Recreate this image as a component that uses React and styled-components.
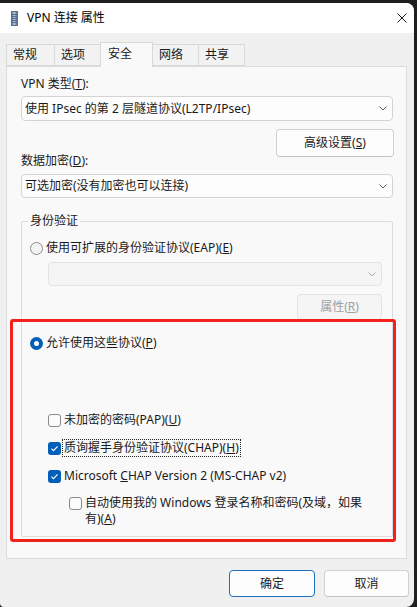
import React from "react";
import styled, { createGlobalStyle } from "styled-components";

const GlobalStyle = createGlobalStyle`
  html, body {
    margin: 0;
    padding: 0;
    background: #1f1f1f;
  }
  body {
    font-family: "Noto Sans", "Noto Sans CJK SC", sans-serif;
    font-size: 12px;
    color: #1a1a1a;
  }
  * {
    box-sizing: border-box;
  }
`;

const Window = styled.div`
  width: 414px;
  height: 604px;
  margin-top: 3px;
  background: #f0f0f0;
  border-radius: 0 8px 8px 4px;
  overflow: hidden;
  display: flex;
  flex-direction: column;
`;

const TitleBar = styled.div`
  height: 30px;
  flex: none;
  background: #ffffff;
  display: flex;
  align-items: center;
  padding: 0 7px 0 11px;
`;

const Title = styled.span`
  margin-left: 9px;
  line-height: 16px;
  color: #000;
`;

const CloseButton = styled.div`
  margin-left: auto;
  width: 10px;
  height: 10px;
  display: flex;
`;

const Body = styled.div`
  padding: 9px 7px 0 6px;
  display: flex;
  flex-direction: column;
`;

const TabStrip = styled.div`
  display: flex;
  align-items: flex-end;
  height: 24px;
`;

const Tab = styled.div`
  width: ${(p) => p.$w}px;
  height: ${(p) => (p.$active ? 25 : 22)}px;
  margin-left: ${(p) => (p.$first ? 0 : -1)}px;
  margin-bottom: ${(p) => (p.$active ? -1 : 0)}px;
  border: 1px solid #d9d9d9;
  border-bottom: ${(p) => (p.$active ? "none" : "1px solid #d9d9d9")};
  background: ${(p) => (p.$active ? "#f9f9f9" : "#f2f2f2")};
  position: relative;
  z-index: ${(p) => (p.$active ? 1 : 0)};
  padding: 0 0 ${(p) => (p.$active ? 3 : 0)}px ${(p) => (p.$active ? 7 : 6)}px;
  display: flex;
  align-items: center;
  line-height: 16px;
`;

const Panel = styled.div`
  position: relative;
  height: 493px;
  border: 1px solid #dcdcdc;
  background: #f9f9f9;
  padding: 9px 13px 0 14px;
  display: flex;
  flex-direction: column;
`;

const FieldLabel = styled.div`
  line-height: 16px;
  margin-top: ${(p) => p.$mt || 0}px;
`;

const Select = styled.div`
  height: ${(p) => p.$h || 25}px;
  margin: ${(p) => p.$m || "4px 0 0 0"};
  border: 1px solid ${(p) => (p.$disabled ? "#e3e3e3" : "#d3d3d3")};
  border-radius: 4px;
  background: ${(p) => (p.$disabled ? "#f5f5f5" : "#fdfdfd")};
  display: flex;
  align-items: center;
  justify-content: space-between;
  padding: 0 5px 0 3px;
  line-height: 16px;
`;

const Chevron = ({ color = "#5f5f5f" }) => (
  <svg width="8" height="5" viewBox="0 0 8 5">
    <polyline points="0.5,0.5 4,4 7.5,0.5" fill="none" stroke={color} strokeWidth="1" />
  </svg>
);

const ButtonRow = styled.div`
  display: flex;
  justify-content: flex-end;
  margin: ${(p) => p.$m || "8px -1px 0 0"};
`;

const Button = styled.div`
  width: ${(p) => p.$w}px;
  height: ${(p) => p.$h}px;
  border: 1px solid ${(p) => (p.$primary ? "#1f6fc0" : p.$disabled ? "#e3e3e3" : "#d0d0d0")};
  border-bottom-color: ${(p) => (p.$primary ? "#1f6fc0" : p.$disabled ? "#e3e3e3" : "#c2c2c2")};
  border-radius: 4px;
  background: ${(p) => (p.$disabled ? "#f5f5f5" : "#fdfdfd")};
  color: ${(p) => (p.$disabled ? "#a0a0a0" : "#1a1a1a")};
  display: flex;
  align-items: center;
  justify-content: center;
  line-height: 16px;
`;

const GroupBox = styled.fieldset`
  margin: 15px 0 0 0;
  min-width: 0;
  border: 1px solid #dcdcdc;
  border-radius: 2px;
  padding: 11px 10px 9px 8px;
  display: flex;
  flex-direction: column;
`;

const Legend = styled.legend`
  margin-left: -2px;
  padding: 0 2px;
  line-height: 16px;
  font-size: 12px;
`;

const OptionRow = styled.div`
  display: flex;
  align-items: ${(p) => (p.$top ? "flex-start" : "center")};
  gap: 3px;
  line-height: 16px;
  margin-top: ${(p) => p.$mt || 0}px;
  margin-left: ${(p) => p.$ml || 0}px;
`;

const Radio = styled.span`
  flex: none;
  width: 13px;
  height: 13px;
  border-radius: 50%;
  position: relative;
  border: ${(p) => (p.$checked ? "none" : "1px solid #8a8a8a")};
  background: ${(p) => (p.$checked ? "#005fb8" : "#f3f3f3")};
  &::after {
    content: "";
    display: ${(p) => (p.$checked ? "block" : "none")};
    position: absolute;
    left: 4px;
    top: 4px;
    width: 5px;
    height: 5px;
    border-radius: 50%;
    background: #fff;
  }
`;

const CheckBox = styled.span`
  flex: none;
  width: 13px;
  height: 13px;
  margin-top: ${(p) => (p.$top ? 2 : 0)}px;
  border-radius: 3px;
  border: ${(p) => (p.$checked ? "none" : "1px solid #8a8a8a")};
  background: ${(p) => (p.$checked ? "#005fb8" : "#fbfbfb")};
  display: flex;
  align-items: center;
  justify-content: center;
`;

const CheckMark = () => (
  <svg width="13" height="13" viewBox="0 0 13 13">
    <polyline points="3.4,6.7 5.5,8.7 9.6,4.3" fill="none" stroke="#fff" strokeWidth="1.1" />
  </svg>
);

const ChecksColumn = styled.div`
  display: flex;
  flex-direction: column;
  gap: 11px;
  margin-top: 61px;
`;

const FocusLabel = styled.span`
  border: 1px dotted #202020;
  padding: 0 1px;
  margin-left: -2px;
  line-height: 16px;
`;

const Highlight = styled.div`
  position: absolute;
  left: 3px;
  top: 252px;
  width: 386px;
  height: 223px;
  border: 3px solid #f3211b;
  border-radius: 3px;
  pointer-events: none;
`;

const Footer = styled.div`
  display: flex;
  justify-content: flex-end;
  gap: 9px;
  padding: 11px 5px 0 0;
`;

const AppIcon = () => (
  <svg width="7" height="15" viewBox="0 0 7 15">
    <defs>
      <linearGradient id="vpnIcon" x1="0" x2="1" y1="0" y2="0">
        <stop offset="0" stopColor="#58769c" />
        <stop offset="0.45" stopColor="#b4c8df" />
        <stop offset="1" stopColor="#4d6a8f" />
      </linearGradient>
    </defs>
    <rect x="0.5" y="0.5" width="6" height="14" fill="url(#vpnIcon)" stroke="#5c6f87" />
    {[3, 5, 7, 9, 11].map((y) => (
      <line key={y} x1="1" x2="6" y1={y + 0.5} y2={y + 0.5} stroke="#3e5676" strokeOpacity="0.7" />
    ))}
  </svg>
);

const tabs = [
  { label: "常规", w: 49 },
  { label: "选项", w: 47 },
  { label: "安全", w: 53, active: true },
  { label: "网络", w: 47 },
  { label: "共享", w: 47 },
];

export default function App() {
  return (
    <>
      <GlobalStyle />
      <Window>
        <TitleBar>
          <AppIcon />
          <Title>VPN 连接 属性</Title>
          <CloseButton>
            <svg width="10" height="10" viewBox="0 0 10 10">
              <path d="M0.5 0.5 L9.5 9.5 M9.5 0.5 L0.5 9.5" stroke="#1a1a1a" strokeWidth="1" />
            </svg>
          </CloseButton>
        </TitleBar>
        <Body>
          <TabStrip>
            {tabs.map((t, i) => (
              <Tab key={t.label} $w={t.w} $active={t.active} $first={i === 0}>
                {t.label}
              </Tab>
            ))}
          </TabStrip>
          <Panel>
            <FieldLabel>
              VPN 类型(<u>T</u>):
            </FieldLabel>
            <Select>
              <span>使用 IPsec 的第 2 层隧道协议(L2TP/IPsec)</span>
              <Chevron />
            </Select>
            <ButtonRow>
              <Button $w={118} $h={28}>
                高级设置(<u>S</u>)
              </Button>
            </ButtonRow>
            <FieldLabel $mt={-4}>
              数据加密(<u>D</u>):
            </FieldLabel>
            <Select $h={24} $m="5px 0 0 0">
              <span>可选加密(没有加密也可以连接)</span>
              <Chevron />
            </Select>
            <GroupBox>
              <Legend>身份验证</Legend>
              <OptionRow>
                <Radio />
                <span>
                  使用可扩展的身份验证协议(EAP)(<u>E</u>)
                </span>
              </OptionRow>
              <Select $disabled $h={24} $m="6px 0 0 18px">
                <span />
                <Chevron color="#a8a8a8" />
              </Select>
              <ButtonRow $m="8px 0 0 0">
                <Button $w={85} $h={26} $disabled>
                  属性(<u>R</u>)
                </Button>
              </ButtonRow>
              <OptionRow $mt={15}>
                <Radio $checked />
                <span>
                  允许使用这些协议(<u>P</u>)
                </span>
              </OptionRow>
              <ChecksColumn>
                <OptionRow $ml={18}>
                  <CheckBox />
                  <span>
                    未加密的密码(PAP)(<u>U</u>)
                  </span>
                </OptionRow>
                <OptionRow $ml={18}>
                  <CheckBox $checked>
                    <CheckMark />
                  </CheckBox>
                  <FocusLabel>
                    质询握手身份验证协议(CHAP)(<u>H</u>)
                  </FocusLabel>
                </OptionRow>
                <OptionRow $ml={18}>
                  <CheckBox $checked>
                    <CheckMark />
                  </CheckBox>
                  <span>
                    Microsoft <u>C</u>HAP Version 2 (MS-CHAP v2)
                  </span>
                </OptionRow>
                <OptionRow $ml={39} $top>
                  <CheckBox $top />
                  <span>
                    自动使用我的 Windows 登录名称和密码(及域，如果
                    <br />
                    有)(<u>A</u>)
                  </span>
                </OptionRow>
              </ChecksColumn>
            </GroupBox>
            <Highlight />
          </Panel>
        </Body>
        <Footer>
          <Button $w={86} $h={27} $primary>
            确定
          </Button>
          <Button $w={85} $h={27}>
            取消
          </Button>
        </Footer>
      </Window>
    </>
  );
}
